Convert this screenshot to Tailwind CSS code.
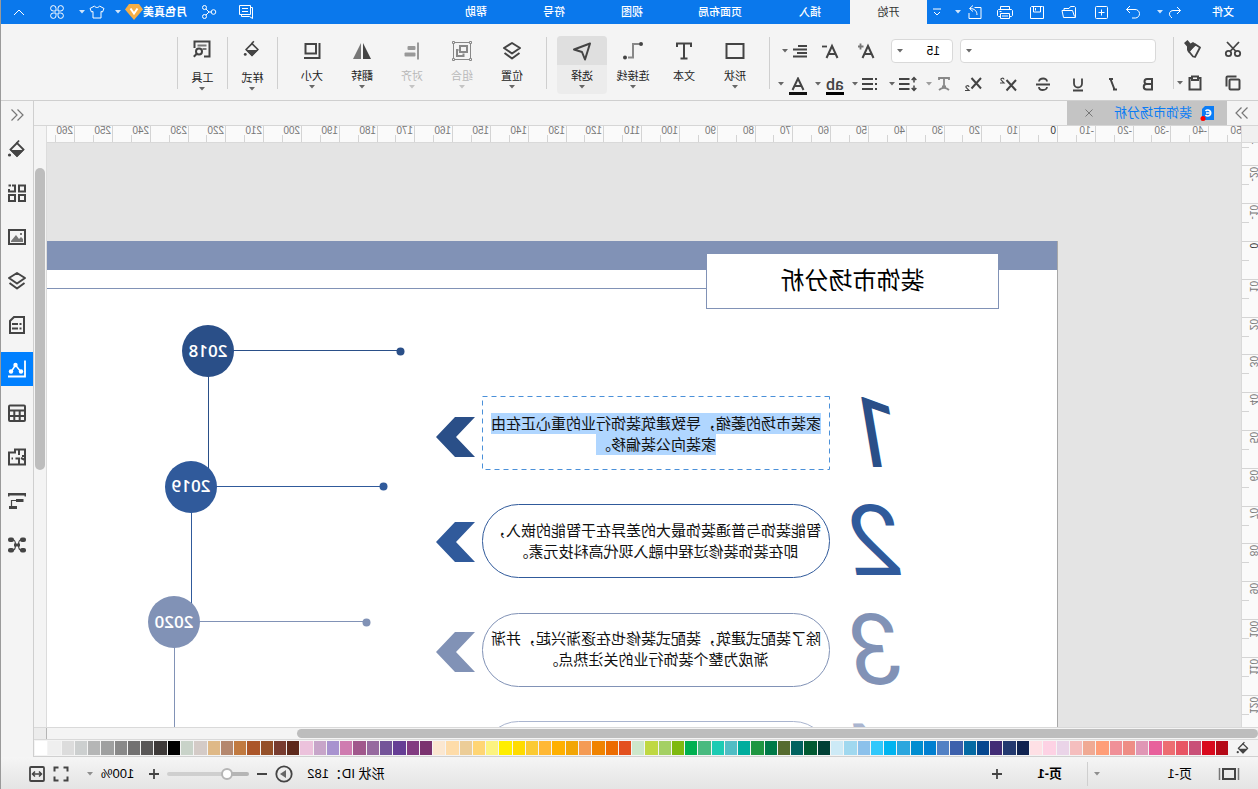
<!DOCTYPE html>
<html lang="zh-CN">
<head>
<meta charset="utf-8">
<title>装饰市场分析</title>
<script src="https://cdn.jsdelivr.net/npm/@tailwindcss/browser@4"></script>
</head>
<body class="overflow-hidden">
<svg class="hidden">
  <symbol id="caret" viewBox="0 0 6 4"><path d="M0 0h6L3 3.500z" fill="currentColor" fill-opacity=".8"/></symbol>
  <symbol id="bucket" viewBox="0 0 20 20"><path d="M10 4l6.500 6.500L10 17l-6.500-6.500z" fill="none" stroke="currentColor" stroke-width="1.800"/><path d="M3 11h14l-7 7z" fill="currentColor"/><path d="M10.500 4.500L8 1.500" stroke="currentColor" stroke-width="1.800"/><circle cx="17.500" cy="16" r="1.600" fill="currentColor"/></symbol>
  <symbol id="layers" viewBox="0 0 20 20"><path d="M10 2l8 5-8 5.500L2 7z M2.500 12l7.500 5.500L17.500 12" fill="none" stroke="currentColor" stroke-width="2" stroke-linejoin="round"/></symbol>
</svg>

<!-- The whole window is flipped horizontally -->
<div class="flex h-screen flex-col -scale-x-100 border-r border-[#9a9a9a] bg-[#f4f4f4] text-[11px] text-[#222] select-none" style="font-family:'Liberation Sans','Noto Sans CJK SC',sans-serif">

  <!-- Title bar -->
  <header class="flex h-6 shrink-0 items-center bg-[#0a78ec] text-white">
    <button class="h-full w-[70px] font-medium">文件</button>
    <button aria-label="撤销" class="ml-px flex w-6 justify-center"><svg class="size-4" viewBox="0 0 16 16" fill="none" stroke="currentColor"><path d="M2.500 6.500H10a3.500 3.500 0 0 1 2.500 6L11 14M6 3L2.500 6.500 6 10"/></svg></button>
    <svg class="h-1 w-1.5"><use href="#caret"/></svg>
    <button aria-label="重做" class="ml-2 flex w-8 justify-center"><svg class="size-4" viewBox="0 0 16 16" fill="none" stroke="currentColor"><path d="M14.500 5.500H6a4 4 0 0 0-.5 8.500H9M11 2l3.500 3.500L11 9"/></svg></button>
    <button aria-label="新建" class="flex w-8 justify-center"><svg class="size-4" viewBox="0 0 16 16" fill="none" stroke="currentColor"><rect x="1.500" y="2.500" width="12" height="12" rx="1"/><path d="M7.500 5.500v6M4.500 8.500h6"/></svg></button>
    <button aria-label="打开" class="flex w-8 justify-center"><svg class="size-4" viewBox="0 0 16 16" fill="none" stroke="currentColor"><path d="M1.500 13.500v-10l1-1h4l1.500 2h5v2M1.500 13.500h12l1.500-7H4.500l-2 6"/></svg></button>
    <button aria-label="保存" class="flex w-8 justify-center"><svg class="size-4" viewBox="0 0 16 16" fill="none" stroke="currentColor"><path d="M2.500 2.500h11l1 1v11h-13v-12zM4.500 2.500v5.500h7V2.500M9.500 4v2.500"/></svg></button>
    <button aria-label="打印" class="flex w-8 justify-center"><svg class="size-4" viewBox="0 0 16 16" fill="none" stroke="currentColor"><path d="M3.500 5.500v-3h9v3M3.500 12.500h-2l-1-1v-5l1-1h13l1 1v5l-1 1h-2M3.500 9.500h9v5h-9zM5 12h6M11.500 7.500h2"/></svg></button>
    <button aria-label="导出" class="flex w-7 justify-center"><svg class="size-4" viewBox="0 0 16 16" fill="none" stroke="currentColor"><path d="M8.500 3.500h-6.500v11h12V9M6 11c0-4 2.500-6.500 7-6.500M10 1.500l3.500 3-3.500 3"/></svg></button>
    <svg class="h-1 w-1.5"><use href="#caret"/></svg>
    <button aria-label="更多" class="ml-2 flex w-5 justify-center"><svg class="size-2" viewBox="0 0 8 8" fill="none" stroke="currentColor"><path d="M0 1h8M1 4l3 3 3-3"/></svg></button>
    <nav class="flex h-full">
      <button class="w-[77px] bg-[#f4f4f4] text-[#333]">开始</button>
      <button class="w-20 font-medium">插入</button>
      <button class="w-[100px] font-medium">页面布局</button>
      <button class="w-[76px] font-medium">视图</button>
      <button class="w-20 font-medium">符号</button>
      <button class="w-[76px] font-medium">帮助</button>
    </nav>
    <div class="ml-auto flex items-center pr-3">
      <button aria-label="反馈"><svg class="size-4" viewBox="0 0 16 16" fill="none" stroke="currentColor"><path d="M3.500 3.500h-2v11l3-2h8v-2M3.500 1.500h11v9h-11zM6 4.500h6M6 7.500h6" /></svg></button>
      <button aria-label="分享" class="ml-[21px]"><svg class="size-4" viewBox="0 0 16 16" fill="none" stroke="currentColor"><circle cx="3.500" cy="8" r="2.300"/><circle cx="12.500" cy="3.500" r="2"/><circle cx="12.500" cy="12.500" r="2"/><path d="M5.800 8H8l3-3M8 8l3 3"/></svg></button>
      <button class="ml-3.5 flex items-center font-bold">月色真美
        <svg class="size-[18px]" viewBox="0 0 18 18"><path d="M4 1h10l4 5.500-9 10.500L0 6.500z" fill="#f5ae45"/><path d="M5.500 5.500l3.500 5 3.500-5" fill="none" stroke="#fff" stroke-width="2"/></svg>
      </button>
      <svg class="ml-1 h-1 w-1.5"><use href="#caret"/></svg>
      <button aria-label="皮肤" class="ml-2.5"><svg class="size-4" viewBox="0 0 16 16" fill="none" stroke="currentColor"><path d="M5.500 2L1 4.500l1.500 3.500 1.500-.5v6.500h8V7.500l1.500.5L15 4.500 10.500 2c-1 2-4 2-5 0z" stroke-linejoin="round"/></svg></button>
      <svg class="ml-1 h-1 w-1.5"><use href="#caret"/></svg>
      <button aria-label="应用" class="ml-3.5"><svg class="size-4" viewBox="0 0 16 16" fill="none" stroke="currentColor"><path d="M7 7H4.500A2.700 2.700 0 1 1 7 4.500zM9 7V4.500A2.700 2.700 0 1 1 11.500 7zM7 9v2.500A2.700 2.700 0 1 1 4.500 9zM9 9h2.500A2.700 2.700 0 1 1 9 11.500z"/></svg></button>
      <button aria-label="收起" class="ml-6"><svg class="h-4 w-3" viewBox="0 0 12 16" fill="none" stroke="currentColor"><path d="M1 11l5-5 5 5"/></svg></button>
    </div>
  </header>

  <!-- Ribbon -->
  <section class="flex h-[77px] shrink-0 border-b border-[#cfcfcf] text-[#444]">
    <div class="flex w-[84px] flex-col pt-3 pl-[7px]">
      <div class="flex h-[26px] items-center">
        <button aria-label="剪切" class="flex w-9 justify-center"><svg class="size-[18px]" viewBox="0 0 18 18" fill="none" stroke="currentColor" stroke-width="1.800"><circle cx="4.500" cy="13.500" r="2.700"/><circle cx="13.500" cy="13.500" r="2.700"/><path d="M3 2l9 9.500M15 2l-9 9.500"/></svg></button>
        <button aria-label="格式刷" class="ml-1 flex w-9 justify-center"><svg class="size-[18px]" viewBox="0 0 18 18"><path d="M2 7.500l4.500-3 7 6.500-4.500 5.500-2 .5z" fill="none" stroke="currentColor" stroke-width="1.800" stroke-linejoin="round"/><path d="M6 4l3-2 2.500 1.500L14.500 0 18 3l-3 3.500v3.500l-2 3z" fill="currentColor"/></svg></button>
      </div>
      <div class="mt-2 flex h-[26px] items-center">
        <button aria-label="复制" class="flex w-9 justify-center"><svg class="size-4" viewBox="0 0 16 16" fill="none" stroke="currentColor" stroke-width="2"><rect x="1.500" y="4.500" width="10" height="10" rx="1"/><path d="M4.500 1.500H13.500a1 1 0 0 1 1 1V11.500" transform="matrix(-1 0 0 1 16 0)" stroke="none"/><path d="M4.500 1.500H13.500a1 1 0 0 1 1 1V11.500"/></svg></button>
        <button aria-label="粘贴" class="ml-2 flex w-6 justify-center"><svg class="size-4" viewBox="0 0 16 16" fill="none" stroke="currentColor" stroke-width="2"><path d="M5 3H2.500v11.500h11V3H11"/><path d="M5 1.500h6v3.500H5z"/></svg></button>
        <svg class="h-1 w-1.5"><use href="#caret"/></svg>
      </div>
    </div>
    <div class="mt-[13px] h-[52px] w-px bg-[#cfcfcf]"></div>

    <div class="ml-[7px] flex w-[390px] flex-col pt-[15px]">
      <div class="flex h-6 items-center pl-[10px]">
        <div class="relative"><select aria-label="字体" class="block h-6 w-[196px] appearance-none rounded-sm border border-[#d9d9d9] bg-white px-2"><option></option></select><svg class="pointer-events-none absolute top-2.5 right-1.5 h-1 w-1.5"><use href="#caret"/></svg></div>
        <div class="relative ml-[7px]"><select aria-label="字号" class="block h-6 w-[62px] appearance-none rounded-sm border border-[#d9d9d9] bg-white pl-3 text-xs text-black"><option>15</option></select><svg class="pointer-events-none absolute top-2.5 right-1.5 h-1 w-1.5"><use href="#caret"/></svg></div>
        <button aria-label="增大字号" class="ml-[7px] flex w-9 justify-center"><svg class="h-[18px] w-5" viewBox="0 0 20 18" fill="none" stroke="currentColor" stroke-width="2"><path d="M2.500 16L8 4l5.500 12M4.500 12h7"/><path d="M12.500 4.500h5.500M15.500 1.500v6" stroke="#777" stroke-width="1.800"/></svg></button>
        <button aria-label="减小字号" class="flex w-9 justify-center"><svg class="h-[18px] w-5" viewBox="0 0 20 18" fill="none" stroke="currentColor" stroke-width="2"><path d="M2.500 16L8 4l5.500 12M4.500 12h7"/><path d="M13 4.500h5" stroke-width="1.800"/></svg></button>
        <button aria-label="对齐方式" class="flex w-[30px] items-center justify-end gap-[5px]"><svg class="h-3.5 w-3.5" viewBox="0 0 14 14" fill="none" stroke="currentColor" stroke-width="2"><path d="M0 2h9M0 5.500h14M0 9h10M0 12.500h14"/></svg><svg class="h-1 w-1.5"><use href="#caret"/></svg></button>
      </div>
      <div class="mt-[9px] flex h-6 items-center">
        <button aria-label="加粗" class="flex w-[35px] justify-center"><svg class="size-4" viewBox="0 0 16 16" fill="none" stroke="currentColor" stroke-width="2"><path d="M4 3h5a2.500 2.500 0 0 1 0 5H4zM4 8h5.500a2.700 2.700 0 0 1 0 5.500H4z"/></svg></button>
        <button aria-label="倾斜" class="flex w-[35px] justify-center"><svg class="size-4" viewBox="0 0 16 16" fill="none" stroke="currentColor" stroke-width="2"><path d="M8 3h4M4 13.500h4M10.500 3l-4 10.500"/></svg></button>
        <button aria-label="下划线" class="flex w-[35px] justify-center"><svg class="size-4" viewBox="0 0 16 16" fill="none" stroke="currentColor" stroke-width="1.800"><path d="M4 2.500v5a4 4 0 0 0 8 0v-5M3 14.500h10"/></svg></button>
        <button aria-label="删除线" class="flex w-[35px] justify-center"><svg class="size-4" viewBox="0 0 16 16" fill="none" stroke="currentColor" stroke-width="1.800"><path d="M12 5.500c-.5-4-8-4-8 0M1 8.500h14M4 11c.5 4 8 4 8 0"/></svg></button>
        <button aria-label="上标" class="flex w-[35px] justify-center"><svg class="h-4 w-[18px]" viewBox="0 0 18 16" fill="none" stroke="currentColor" stroke-width="2"><path d="M1 4l9.500 10.500M10.500 4L1 14.500"/><path d="M13 3.500c.3-2 3.500-1.500 3 .3L13 7h4" stroke-width="1.200"/></svg></button>
        <button aria-label="下标" class="flex w-[35px] justify-center"><svg class="h-4 w-[18px]" viewBox="0 0 18 16" fill="none" stroke="currentColor" stroke-width="2"><path d="M1 2l9.500 10.500M10.500 2L1 12.500"/><path d="M13 11c.3-2 3.500-1.500 3 .3L13 14.500h4" stroke-width="1.200"/></svg></button>
        <div class="flex gap-[7px]">
          <button aria-label="文字方向" class="flex w-[30px] items-center justify-end gap-1 text-[#888]"><svg class="size-4" viewBox="0 0 16 16" fill="none" stroke="currentColor" stroke-width="1.800"><path d="M3 4V2h10v2M8 2v8.500M6 10.500h4M3 14c3-2.500 7-2.500 10 0"/></svg><svg class="h-1 w-1.5"><use href="#caret"/></svg></button>
          <button aria-label="行距" class="flex w-[30px] items-center justify-end gap-1"><svg class="h-4 w-[18px]" viewBox="0 0 18 16" fill="none" stroke="currentColor" stroke-width="2"><path d="M7.500 3H18M7.500 8H18M7.500 13H18"/><path d="M3 1.500v5M3 9.500v5M.7 4L3 1.500 5.300 4M.7 12L3 14.500 5.300 12" stroke-width="1.500"/></svg><svg class="h-1 w-1.5"><use href="#caret"/></svg></button>
          <button aria-label="项目符号" class="flex w-[30px] items-center justify-end gap-1"><svg class="size-4" viewBox="0 0 16 16" fill="none" stroke="currentColor" stroke-width="2"><path d="M1 3h2M5 3h11M1 8h2M5 8h11M1 13h2M5 13h11"/></svg><svg class="h-1 w-1.5"><use href="#caret"/></svg></button>
          <button aria-label="突出显示" class="flex w-[30px] items-center justify-end gap-[5px]"><span class="mt-1 border-b-[3px] border-black text-[16px] leading-[15px] font-medium" style="font-family:Roboto,sans-serif">ab</span><svg class="h-1 w-1.5"><use href="#caret"/></svg></button>
          <button aria-label="字体颜色" class="flex w-[30px] items-center justify-end gap-[5px]"><svg class="mt-1 h-[18px] w-[18px]" viewBox="0 0 18 18" fill="none" stroke="currentColor" stroke-width="2"><path d="M3.500 13L9 1.500 14.500 13M5.500 9h7"/><path d="M0 16.500h18" stroke="#111" stroke-width="3"/></svg><svg class="h-1 w-1.5"><use href="#caret"/></svg></button>
        </div>
      </div>
    </div>

    <div class="ml-1.5 mt-[13px] h-[52px] w-px bg-[#cfcfcf]"></div>
    <div class="ml-[9px] flex gap-px pt-3">
      <button class="flex h-[58px] w-[50px] flex-col items-center"><span class="flex h-[29px] items-center"><svg class="h-5 w-5" viewBox="0 0 20 20"><rect x="1.500" y="3" width="17" height="14" fill="none" stroke="currentColor" stroke-width="2"/></svg></span><span class="mt-1 leading-[14px] text-[#222]">形状</span><svg class="mt-0.5 h-1 w-1.5 shrink-0"><use href="#caret"/></svg></button>
      <button class="flex h-[58px] w-[50px] flex-col items-center"><span class="flex h-[29px] items-center"><svg class="h-5 w-5" viewBox="0 0 20 20" fill="none" stroke="currentColor" stroke-width="2"><path d="M3 6V2.500h14V6M10 2.500v15M6.500 17.500h7"/></svg></span><span class="mt-1 leading-[14px] text-[#222]">文本</span></button>
      <button class="flex h-[58px] w-[50px] flex-col items-center"><span class="flex h-[29px] items-center"><svg class="h-5 w-5" viewBox="0 0 20 20" fill="none"><path d="M3.500 3H10v13.500h5" stroke="#888" stroke-width="2"/><circle cx="2" cy="3" r="2" fill="currentColor"/><circle cx="18" cy="16.500" r="2" fill="currentColor"/></svg></span><span class="mt-1 leading-[14px] text-[#222]">连接线</span><svg class="mt-0.5 h-1 w-1.5 shrink-0"><use href="#caret"/></svg></button>
      <button class="flex h-[58px] w-[50px] flex-col items-center rounded-sm bg-[#ececec]"><span class="flex h-[29px] w-full items-center justify-center rounded-t-sm bg-[#dfdfdf]"><svg class="h-5 w-5" viewBox="0 0 20 20" fill="none" stroke="currentColor" stroke-width="2" stroke-linejoin="round"><path d="M2 2.500l16 6-8 2.500-3 7.500z"/></svg></span><span class="mt-1 leading-[14px] text-[#222]">选择</span><svg class="mt-0.5 h-1 w-1.5 shrink-0"><use href="#caret"/></svg></button>
    </div>
    <div class="ml-2.5 mt-[13px] h-[52px] w-px bg-[#cfcfcf]"></div>
    <div class="ml-[9px] flex pt-3">
      <button class="flex h-[58px] w-[50px] flex-col items-center"><span class="flex h-[29px] items-center"><svg class="h-5 w-5"><use href="#layers"/></svg></span><span class="mt-1 leading-[14px] text-[#222]">位置</span><svg class="mt-0.5 h-1 w-1.5 shrink-0"><use href="#caret"/></svg></button>
      <button disabled class="flex h-[58px] w-[50px] flex-col items-center text-[#b8b8b8]"><span class="flex h-[29px] items-center text-[#888]"><svg class="h-5 w-5" viewBox="0 0 20 20" fill="none" stroke="currentColor"><path d="M1.500 3v14M18.500 3v14M3 1.500h14M3 18.500h14"/><path d="M.5.5h2v2h-2zM17.500.5h2v2h-2zM.5 17.500h2v2h-2zM17.500 17.500h2v2h-2z"/><path d="M5 5h7v6H5zM13.500 9H15v6H8.500v-2.500" stroke-width="2"/></svg></span><span class="mt-1 leading-[14px]">组合</span><svg class="mt-0.5 h-1 w-1.5 shrink-0"><use href="#caret"/></svg></button>
      <button disabled class="flex h-[58px] w-[50px] flex-col items-center text-[#b8b8b8]"><span class="flex h-[29px] items-center text-[#999]"><svg class="h-5 w-5" viewBox="0 0 20 20" fill="currentColor"><path d="M3 1.500h2v17H3z"/><rect x="6.500" y="5" width="8" height="4" rx="1"/><rect x="6.500" y="11.500" width="11" height="4" rx="1"/></svg></span><span class="mt-1 leading-[14px]">对齐</span><svg class="mt-0.5 h-1 w-1.5 shrink-0"><use href="#caret"/></svg></button>
      <button class="flex h-[58px] w-[50px] flex-col items-center"><span class="flex h-[29px] items-center"><svg class="h-5 w-5" viewBox="0 0 20 20"><path d="M9 2v16H1z" fill="#444"/><path d="M11 2v16h8z" fill="#777"/></svg></span><span class="mt-1 leading-[14px] text-[#222]">翻转</span><svg class="mt-0.5 h-1 w-1.5 shrink-0"><use href="#caret"/></svg></button>
      <button class="flex h-[58px] w-[50px] flex-col items-center"><span class="flex h-[29px] items-center"><svg class="h-5 w-5" viewBox="0 0 20 20" fill="none" stroke="currentColor" stroke-width="2"><rect x="6" y="3" width="10.500" height="9.500"/><path d="M2.500 2v15H18"/></svg></span><span class="mt-1 leading-[14px] text-[#222]">大小</span><svg class="mt-0.5 h-1 w-1.5 shrink-0"><use href="#caret"/></svg></button>
    </div>
    <div class="ml-[9px] mt-[13px] h-[52px] w-px bg-[#cfcfcf]"></div>
    <button class="mt-3 flex h-[58px] w-[49px] flex-col items-center"><span class="flex h-[25px] items-center"><svg class="size-[18px]"><use href="#bucket"/></svg></span><span class="mt-2.5 leading-[14px] text-[#222]">样式</span><svg class="mt-0.5 h-1 w-1.5 shrink-0"><use href="#caret"/></svg></button>
    <div class="mt-[13px] h-[52px] w-px bg-[#cfcfcf]"></div>
    <button class="mt-3 flex h-[58px] w-[49px] flex-col items-center"><span class="flex h-[25px] items-center"><svg class="size-5" viewBox="0 0 20 20" fill="none" stroke="currentColor" stroke-width="2"><path d="M8 17.500H2.500V2.500h15V9"/><path d="M5.500 6.500h9M5.500 10h4" stroke="#777"/><circle cx="13" cy="12.500" r="3"/><path d="M15.200 14.700l3 3"/></svg></span><span class="mt-2.5 leading-[14px] text-[#222]">工具</span><svg class="mt-0.5 h-1 w-1.5 shrink-0"><use href="#caret"/></svg></button>
    <div class="mt-[13px] h-[52px] w-px bg-[#cfcfcf]"></div>
  </section>

  <!-- Work area with tool rail -->
  <div class="flex min-h-0 flex-1">
    <main class="flex min-w-0 flex-1 flex-col">
      <div class="flex h-[25px] shrink-0 border-b border-[#d6d6d6]">
        <button aria-label="展开左栏" class="flex w-[31px] items-center justify-center text-[#777]"><svg class="h-3.5 w-3.5" viewBox="0 0 14 14" fill="none" stroke="currentColor" stroke-width="1.200"><path d="M1.500 1.500L7 7l-5.500 5.500M7.500 1.500L13 7l-5.500 5.500"/></svg></button>
        <div class="flex w-40 items-center bg-[#c4c4c4] pl-3">
          <svg class="h-4 w-[15px]" viewBox="0 0 15 16"><path d="M1 1h9l3 3v11H1z" fill="#0a7cf5"/><path d="M9.500 6A3 3 0 1 0 9.500 10M5 8h4" fill="none" stroke="#fff" stroke-width="1.600"/><circle cx="12" cy="13.500" r="2.500" fill="#f00"/></svg>
          <span class="ml-2 text-[13px] text-[#0a7cf5]">装饰市场分析</span>
          <button aria-label="关闭" class="ml-[21px]"><svg class="size-2" viewBox="0 0 8 8" stroke="#777"><path d="M.5.500l7 7M7.500.500l-7 7"/></svg></button>
        </div>
      </div>
      <div class="flex min-h-0 flex-1">
        <div class="flex min-w-0 flex-1 flex-col">
          <div class="flex h-[17px] shrink-0 border-b border-[#d9d9d9] bg-[#fafafa]">
            <div class="w-[17px] shrink-0 border-r border-[#d9d9d9] bg-[#f0f0f0]"></div>
            <div id="rulerX" class="relative flex-1 overflow-hidden text-[10px] leading-[9px] text-[#777]"></div>
          </div>
          <div class="flex min-h-0 flex-1">
            <div id="rulerY" class="relative w-[17px] shrink-0 overflow-hidden border-r border-[#d9d9d9] bg-[#fafafa] text-[10px] leading-[9px] text-[#777]"></div>
            <!-- Drawing canvas -->
            <div class="relative flex-1 overflow-hidden bg-[#e4e4e4]">
              <div class="absolute top-[98px] right-0 bottom-0 left-[183px] overflow-hidden border-l border-[#a8a8a8] bg-white">
                <div class="absolute inset-x-0 top-0 h-[29px] bg-[#8192b6]"></div>
                <div class="absolute top-[47px] right-0 left-[350px] h-px bg-[#8192b6]"></div>
                <h1 class="absolute top-3 left-[58px] flex h-14 w-[293px] items-center justify-center border border-[#8192b6] bg-white text-[24px] text-black">装饰市场分析</h1>
                <svg class="absolute top-0 left-0 h-[500px] w-[1000px]" viewBox="1 0 1000 500" fill="none">
                  <g stroke="#2a4f88"><path d="M658 109.500h200M849.500 110v119"/></g>
                  <g stroke="#305a9b"><path d="M675 245.500h200M866.500 246v119"/></g>
                  <g stroke="#8192b6"><path d="M692 380.500h200M883.500 381v119"/></g>
                  <circle cx="657.500" cy="110.500" r="4" fill="#2a4f88"/><circle cx="674.500" cy="245.500" r="4" fill="#305a9b"/><circle cx="691.500" cy="381.500" r="4" fill="#8192b6"/>
                  <circle cx="850" cy="110" r="26" fill="#2a4f88"/><circle cx="867" cy="246" r="26" fill="#305a9b"/><circle cx="884" cy="381" r="26" fill="#8192b6"/>
                  <path d="M583 176h20l19 20-19 20h-20l19-20z" fill="#2a4f88"/>
                  <path d="M583 281h20l19 20-19 20h-20l19-20z" fill="#305a9b"/>
                  <path d="M583 391h20l19 20-19 20h-20l19-20z" fill="#8192b6"/>
                  <rect x="228.500" y="155.500" width="347" height="73" stroke="#4a90d9" stroke-dasharray="5 4"/>
                  <rect x="228.500" y="263.500" width="347" height="73" rx="36" stroke="#305a9b"/>
                  <rect x="228.500" y="372.500" width="347" height="73" rx="36" stroke="#8192b6"/>
                  <rect x="228.500" y="480.500" width="347" height="73" rx="36" stroke="#aab5cf"/>
                </svg>
                <div class="absolute top-36 left-[155px] text-[98px] leading-[98px] italic" style="font-family:Roboto,sans-serif">
                  <div class="h-[108px] text-[#2a4f88]">1</div>
                  <div class="h-[109px] text-[#305a9b]">2</div>
                  <div class="h-[109px] text-[#8192b6]">3</div>
                  <div class="h-[109px] text-[#aab5cf]">4</div>
                </div>
                <p class="absolute top-[155px] left-[227px] flex h-[76px] w-[348px] items-center justify-center text-center text-[15px] leading-[21px] text-[#111]"><span><mark class="inline-block h-[21px] bg-[#b0d6ff] text-inherit">家装市场的萎缩，导致建筑装饰行业的重心正在由</mark><br><mark class="inline-block h-[21px] bg-[#b0d6ff] text-inherit">家装向公装偏移。</mark></span></p>
                <p class="absolute top-[263px] left-[227px] flex h-[74px] w-[348px] items-center justify-center text-center text-[15px] leading-[21px] text-[#111]">智能装饰与普通装饰最大的差异在于智能的嵌入，<br>即在装饰装修过程中融入现代高科技元素。</p>
                <p class="absolute top-[371px] left-[227px] flex h-[74px] w-[348px] items-center justify-center text-center text-[15px] leading-[21px] text-[#111]">除了装配式建筑，装配式装修也在逐渐兴起，并渐<br>渐成为整个装饰行业的关注热点。</p>
                <div class="absolute top-[100px] left-[823px] w-[52px] text-center text-[17px] leading-5 font-semibold text-white" style="font-family:'Open Sans',sans-serif">2018</div>
                <div class="absolute top-[235px] left-[840px] w-[52px] text-center text-[17px] leading-5 font-semibold text-white" style="font-family:'Open Sans',sans-serif">2019</div>
                <div class="absolute top-[371px] left-[857px] w-[52px] text-center text-[17px] leading-5 font-semibold text-white" style="font-family:'Open Sans',sans-serif">2020</div>
              </div>
            </div>
          </div>
        </div>
        <div class="w-[13px] shrink-0 border-l border-[#dcdcdc] px-px pt-[42px]"><div class="h-[302px] w-2.5 rounded-full bg-[#bdbdbd]"></div></div>
      </div>
      <div class="flex h-[13px] shrink-0 border-y border-[#d9d9d9]">
        <div class="my-px flex-1 pr-[250px]"><div class="h-[9px] rounded-full bg-[#bdbdbd]"></div></div>
        <div class="w-[13px] border-l border-[#b5b5b5] bg-[#ececec]"></div>
      </div>
      <div class="flex h-[17px] shrink-0 items-center border-b border-[#d0d0d0]">
        <button aria-label="填充颜色" class="flex w-[30px] shrink-0 justify-center text-[#444]"><svg class="size-3.5"><use href="#bucket"/></svg></button>
        <div id="palette" class="flex h-3.5 flex-1 gap-px pr-px"></div>
      </div>
    </main>

    <aside class="flex w-[33px] shrink-0 flex-col border-l border-[#cfcfcf] text-[#444]">
      <button aria-label="展开右栏" class="flex h-[27px] shrink-0 items-center justify-center text-[#777]"><svg class="h-3.5 w-3.5" viewBox="0 0 14 14" fill="none" stroke="currentColor" stroke-width="1.200"><path d="M6.500 1.500L1 7l5.500 5.500M12.500 1.500L7 7l5.500 5.500"/></svg></button>
      <div class="flex flex-col gap-2.5 py-1">
        <button aria-label="填充" class="flex h-[34px] items-center justify-center"><svg class="size-5"><use href="#bucket"/></svg></button>
        <button aria-label="组件" class="flex h-[34px] items-center justify-center"><svg class="size-5" viewBox="0 0 20 20" fill="none" stroke="currentColor" stroke-width="2"><rect x="2" y="2.500" width="6" height="6"/><path d="M15 2.500h-3v6h6V6M16 2.500h2.500"/><rect x="2" y="12" width="6" height="6"/><rect x="12" y="12" width="6" height="6"/></svg></button>
        <button aria-label="图片" class="flex h-[34px] items-center justify-center"><svg class="size-5" viewBox="0 0 20 20"><path d="M4 15v-3l2-2 2 2 3-4 5 6v1z" fill="#777"/><rect x="2" y="3" width="16" height="14" fill="none" stroke="currentColor" stroke-width="2"/><path d="M5 6h2v2H5z" fill="#777"/></svg></button>
        <button aria-label="图层" class="flex h-[34px] items-center justify-center"><svg class="size-5"><use href="#layers"/></svg></button>
        <button aria-label="页面" class="flex h-[34px] items-center justify-center"><svg class="size-5" viewBox="0 0 20 20" fill="none" stroke="currentColor" stroke-width="2"><path d="M3 2h10l4 4v12H3z"/><path d="M5.500 9h2M9 9h6M5.500 13.500h2M9 13.500h6" stroke-width="1.800"/></svg></button>
        <button aria-label="图表" class="flex h-[34px] items-center justify-center bg-[#0080ff] text-white"><svg class="size-5" viewBox="0 0 20 20" fill="none" stroke="currentColor"><path d="M2 1.500v16h17" stroke-width="1.800"/><path d="M6 13l5.500-7L16 13" stroke-width="1.500"/><g fill="currentColor" stroke="none"><circle cx="6" cy="12.500" r="2.200"/><circle cx="11.500" cy="6" r="2.200"/><circle cx="16" cy="12.500" r="2.200"/></g></svg></button>
        <button aria-label="表格" class="flex h-[34px] items-center justify-center"><svg class="size-5" viewBox="0 0 20 20" fill="none" stroke="currentColor" stroke-width="2"><rect x="2" y="2.500" width="16" height="15.500" rx="1"/><path d="M2 7.500h16M2 13h16M7.300 8v10M12.700 8v10"/></svg></button>
        <button aria-label="平面图" class="flex h-[34px] items-center justify-center"><svg class="size-5" viewBox="0 0 20 20" fill="none" stroke="currentColor" stroke-width="2"><path d="M2 2.500h10v3h6v12H2zM2 9h3M8 2.500V8M2 13l4-2M8 17v-5.500h3.500M14 11.500h1.500"/></svg></button>
        <button aria-label="甘特图" class="flex h-[34px] items-center justify-center"><svg class="size-5" viewBox="0 0 20 20" fill="currentColor"><path d="M1 2h18v3.500h-1.500V4.500h-15v1H1zM3.500 8h7.500v3H3.500zM10 15h8v3h-8z"/><path d="M11 9.500h4.500V15" fill="none" stroke="currentColor" stroke-width="1.200"/></svg></button>
        <button aria-label="思维导图" class="flex h-[34px] items-center justify-center"><svg class="size-5" viewBox="0 0 20 20" fill="currentColor"><rect x="1" y="2.500" width="6" height="4.500" rx="2"/><rect x="13" y="2.500" width="6" height="4.500" rx="2"/><rect x="1" y="13" width="6" height="4.500" rx="2"/><rect x="13" y="13" width="6" height="4.500" rx="2"/><rect x="7" y="8.500" width="6" height="3"/><path d="M6 5q2.500 0 2.500 5T6 15M14 5q-2.500 0-2.500 5t2.500 5" fill="none" stroke="currentColor" stroke-width="1.200"/></svg></button>
      </div>
    </aside>
  </div>

  <!-- Status bar -->
  <footer class="flex h-8 shrink-0 items-center bg-linear-to-b from-[#f5f5f5] to-[#e4e4e4] pt-0.5 text-[13px] text-[#444]">
    <button aria-label="视图模式" class="ml-[18px]"><svg class="h-4 w-[22px]" viewBox="0 0 22 16" fill="none" stroke="currentColor" stroke-width="2"><rect x="5" y="3" width="12" height="10"/><path d="M1.500 2v12M20.500 2v12" stroke="#777" stroke-width="1.500"/></svg></button>
    <button class="ml-[26px] flex w-[98px] items-center justify-between text-black">页-1<svg class="h-1 w-1.5 text-[#777]"><use href="#caret"/></svg></button>
    <div class="ml-1.5 h-6 w-px bg-[#cfcfcf]"></div>
    <button class="ml-[25px] font-bold text-black">页-1</button>
    <button aria-label="添加页" class="ml-[35px]"><svg class="size-2.5" viewBox="0 0 10 10" stroke="currentColor" stroke-width="1.800"><path d="M5 0v10M0 5h10"/></svg></button>
    <div class="ml-auto flex items-center pr-7">
      <span class="text-[13px] text-black">形状 ID：182</span>
      <button aria-label="播放" class="ml-3.5"><svg class="size-[18px]" viewBox="0 0 18 18"><circle cx="9" cy="9" r="7.700" fill="none" stroke="currentColor" stroke-width="1.800"/><path d="M7 5l6 4-6 4z" fill="#666"/></svg></button>
      <button aria-label="缩小" class="ml-2"><svg class="size-2.5" viewBox="0 0 10 10" stroke="currentColor" stroke-width="2"><path d="M0 5h10"/></svg></button>
      <input type="range" aria-label="缩放" min="0" max="100" value="23" class="ml-2 h-1 w-[82px] appearance-none rounded-full bg-linear-to-r from-[#b5b5b5] from-25% to-[#cfcfcf] to-25% [&::-webkit-slider-thumb]:size-3 [&::-webkit-slider-thumb]:appearance-none [&::-webkit-slider-thumb]:rounded-full [&::-webkit-slider-thumb]:border-2 [&::-webkit-slider-thumb]:border-solid [&::-webkit-slider-thumb]:border-[#b5b5b5] [&::-webkit-slider-thumb]:bg-white">
      <button aria-label="放大" class="ml-2"><svg class="size-2.5" viewBox="0 0 10 10" stroke="currentColor" stroke-width="1.800"><path d="M5 0v10M0 5h10"/></svg></button>
      <button class="ml-[15px] flex items-center gap-2 text-[13px] text-black">100%<svg class="h-1 w-1.5 text-[#777]"><use href="#caret"/></svg></button>
      <button aria-label="全屏" class="ml-[18px]"><svg class="size-4" viewBox="0 0 16 16" fill="none" stroke="currentColor" stroke-width="2"><path d="M1.500 5.500v-4h4M10.500 1.500h4v4M14.500 10.500v4h-4M5.500 14.500h-4v-4"/></svg></button>
      <button aria-label="适应宽度" class="ml-2"><svg class="size-4" viewBox="0 0 16 16" fill="none" stroke="currentColor" stroke-width="1.800"><rect x="1" y="1" width="14" height="14" rx="1"/><path d="M4 8h8M6 5.500L3.500 8 6 10.500M10 5.500L12.500 8 10 10.500" stroke-width="1.500"/></svg></button>
    </div>
  </footer>
</div>

<script>
const colours = 'b50917 d9091d c95078 e85565 ed6d72 e8609c e097b5 ee8d85 f09098 ff9e78 f0aa94 f5bebe ead4e8 fdd2e4 fee0e5 102451 23396f 412c75 06478f 046aa4 3d60ac 5281c4 007fd0 008dd0 2ba6de 00b4f0 31c8fb 8cc1eb a0d8ef cdeaf6 004035 005931 00625f 566b2f 007a48 1f9641 00ad9d 50bdc4 1ccbb3 49ba7f 00b050 7fb910 a4d064 bfd842 cde7cb e3501f ec6b00 f08300 f49b55 f2a505 ffb000 ffb835 fbca33 ffdb00 ffee00 fcf380 ffd574 eccd98 fedca9 fbe7d0 7b3370 823c81 663e95 745499 966a9f a0588c cf7cb0 a893cf c7a5c9 ecc2dc 5d291b 783c30 955029 ab5629 c17a40 b4876e dfb987 d4cbc7 c9d3c9 000000 3e3a39 595757 727171 898989 9fa0a0 b5b6b6 cccfcf dcdcdc efefef ffffff'.split(' ');
document.getElementById('palette').innerHTML = colours.map(c => `<button aria-label="#${c}" class="flex-1" style="background:#${c}"></button>`).join('');

// Rulers: one major tick every 10 mm, one minor tick between
const step = 37.8;
const rx = document.getElementById('rulerX'), ry = document.getElementById('rulerY');
let x = '', y = '';
for (let n = -5; 183 + n * step < rx.clientWidth - 20; n++) {
  const p = Math.round(183 + n * step), m = Math.round(183 + (n + .5) * step);
  x += `<i class="absolute inset-y-0 w-px bg-[#d4d4d4]" style="left:${p}px"></i><i class="absolute bottom-0 h-[7px] w-px bg-[#d4d4d4]" style="left:${m}px"></i><span class="absolute top-0 ${n ? '' : 'text-[#333]'}" style="left:${p + 2}px">${n * 10}</span>`;
}
for (let n = -3; 98 + n * step < ry.clientHeight - 20; n++) {
  const p = Math.round(98 + n * step), m = Math.round(98 + (n + .5) * step);
  y += `<i class="absolute inset-x-0 h-px bg-[#d4d4d4]" style="top:${p}px"></i><i class="absolute right-0 h-px w-[7px] bg-[#d4d4d4]" style="top:${m}px"></i><span class="absolute left-0 rotate-180 [writing-mode:vertical-rl] ${n ? '' : 'text-[#333]'}" style="top:${p + 2}px">${n * 10}</span>`;
}
rx.innerHTML = x;
ry.innerHTML = y;
</script>
</body>
</html>
